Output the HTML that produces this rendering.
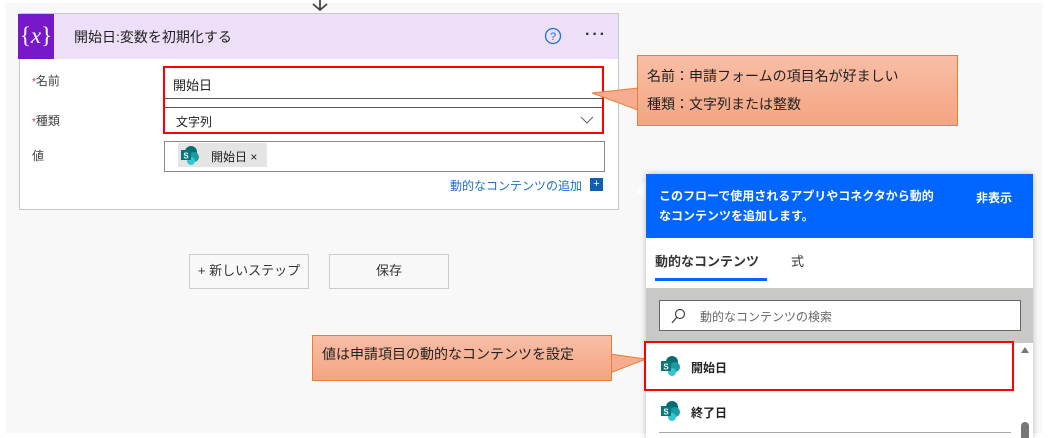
<!DOCTYPE html>
<html><head><meta charset="utf-8"><style>
*{box-sizing:border-box;margin:0;padding:0}
body{width:1053px;height:438px;background:#fff;position:relative;overflow:hidden;font-family:"Liberation Sans","Noto Sans CJK JP",sans-serif;color:#222}
.a{position:absolute}
.bg{left:5px;top:3px;width:1038px;height:430px;background:#f8f8f8}
.card{left:19px;top:13px;width:600px;height:197px;background:#fff;border:1px solid #c8c8c8}
.hdr{left:0;top:0;width:598px;height:45px;background:#ecdff7}
.ico{left:-2px;top:0;width:36px;height:45px;background:#7719c9;color:#fff;font-family:"Liberation Serif",serif;font-size:23px;text-align:center;line-height:44px}
.lbl{font-size:12px;color:#444}
.star{color:#d13438;font-size:10px}
.cl{background:linear-gradient(#f8bea6,#f4a582);border:1px solid #ed7d31;font-size:14px;color:#222}
.btn{border:1px solid #ccc;font-size:13px;text-align:center;line-height:32px;background:#f8f8f8;color:#333}
.panel{left:646px;top:174px;width:387px;height:264px;background:#fff;box-shadow:0 0 6px rgba(0,0,0,.25)}
</style></head><body>
<div class="a bg"></div>
<svg class="a" style="left:311px;top:0" width="18" height="12"><path d="M9 0V10M2 4L9 10L16 4" stroke="#444" stroke-width="1.8" fill="none"/></svg>
<div class="a card">
 <div class="a hdr"></div>
 <div class="a ico">{<i>x</i>}</div>
 <div class="a" style="left:54px;top:13px;font-size:14px;color:#222">開始日:変数を初期化する</div>
 <svg class="a" style="left:524px;top:13px" width="18" height="18"><circle cx="9" cy="9" r="7.5" stroke="#1a6fd8" stroke-width="1.3" fill="none"/><text x="9" y="13" font-size="11" text-anchor="middle" fill="#1a6fd8" font-family="Liberation Sans">?</text></svg>
 <div class="a" style="left:565px;top:12px;font-size:16px;letter-spacing:2px;color:#333;font-weight:bold">···</div>
 <div class="a lbl" style="left:12px;top:58px"><span class="star">*</span>名前</div>
 <div class="a lbl" style="left:12px;top:98px"><span class="star">*</span>種類</div>
 <div class="a lbl" style="left:12px;top:133px">値</div>
</div>
<div class="a" style="left:165px;top:68px;width:437px;height:31px;border-bottom:1px solid #555;background:#fff"></div>
<div class="a" style="left:173px;top:75px;font-size:13px">開始日</div>
<div class="a" style="left:165px;top:107px;width:437px;height:25px;border-top:1px solid #555;background:#fff"></div>
<div class="a" style="left:176px;top:113px;font-size:12px">文字列</div>
<svg class="a" style="left:580px;top:115px" width="14" height="10"><path d="M1 2L7 8L13 2" stroke="#666" fill="none"/></svg>
<div class="a" style="left:163px;top:66px;width:441px;height:68px;border:2px solid #f00"></div>
<div class="a" style="left:164px;top:141px;width:441px;height:31px;border:1px solid #888;background:#fff"></div>
<div class="a" style="left:178px;top:143px;width:89px;height:24px;background:#e4e4e4"></div>
<svg class="a" style="left:180px;top:145px" width="20" height="20"><circle cx="11" cy="7" r="6" fill="#036c70"/><circle cx="14" cy="12" r="5" fill="#1a9ba1"/><circle cx="11" cy="16" r="4" fill="#37c6d0"/><rect x="1" y="5" width="10" height="10" fill="#03787c"/><text x="6" y="13.5" font-size="8" fill="#fff" text-anchor="middle" font-weight="bold">S</text></svg>
<div class="a" style="left:211px;top:148px;font-size:12px">開始日 ×</div>
<div class="a" style="left:450px;top:177px;font-size:12px;color:#1a6fd8">動的なコンテンツの追加</div>
<div class="a" style="left:590px;top:178px;width:13px;height:13px;background:#0f5fb5;color:#fff;font-size:11px;line-height:12px;text-align:center">+</div>
<svg class="a" style="left:590px;top:85px" width="50" height="30"><path d="M48 3L2 8L48 25Z" fill="#f6ad8f" stroke="#ed7d31"/></svg>
<div class="a cl" style="left:637px;top:55px;width:321px;height:71px;padding:6px 0 0 9px;line-height:28px">名前：申請フォームの項目名が好ましい<br>種類：文字列または整数</div>
<div class="a btn" style="left:189px;top:254px;width:120px;height:35px">+ 新しいステップ</div>
<div class="a btn" style="left:329px;top:254px;width:120px;height:35px">保存</div>
<svg class="a" style="left:608px;top:350px" width="40" height="30"><path d="M2 4L38 9L2 23Z" fill="#f6ad8f" stroke="#ed7d31"/></svg>
<div class="a cl" style="left:312px;top:335px;width:300px;height:46px;padding:8px 0 0 9px">値は申請項目の動的なコンテンツを設定</div>
<svg class="a" style="left:634px;top:179px" width="14" height="24"><path d="M13 0L2 12L13 24Z" fill="#fff"/></svg>
<div class="a panel">
 <div class="a" style="left:0;top:0;width:387px;height:64px;background:#0066ff"></div>
 <div class="a" style="left:13px;top:12px;width:320px;font-size:12px;color:#fff;line-height:20px;font-weight:bold;white-space:nowrap">このフローで使用されるアプリやコネクタから動的<br>なコンテンツを追加します。</div>
 <div class="a" style="left:330px;top:15px;font-size:12px;color:#fff;font-weight:bold">非表示</div>
 <div class="a" style="left:9px;top:77px;font-size:13px;font-weight:bold;color:#333">動的なコンテンツ</div>
 <div class="a" style="left:145px;top:77px;font-size:13px;color:#333">式</div>
 <div class="a" style="left:9px;top:104px;width:112px;height:3px;background:#0066ff"></div>
 <div class="a" style="left:0;top:114px;width:387px;height:55px;background:#c8c9c6"></div>
 <div class="a" style="left:13px;top:126px;width:362px;height:31px;background:#fff;border:1px solid #666"></div>
 <svg class="a" style="left:24px;top:134px" width="16" height="16"><circle cx="10" cy="6" r="4.5" stroke="#444" fill="none" stroke-width="1.2"/><path d="M7 9L2 15" stroke="#444" stroke-width="1.3"/></svg>
 <div class="a" style="left:54px;top:134px;font-size:12px;color:#666">動的なコンテンツの検索</div>
 <svg class="a" style="left:14px;top:181px" width="22" height="22"><circle cx="12" cy="7" r="6" fill="#036c70"/><circle cx="15" cy="12" r="5" fill="#1a9ba1"/><circle cx="12" cy="17" r="4" fill="#37c6d0"/><rect x="1" y="6" width="10" height="10" fill="#03787c"/><text x="6" y="14.5" font-size="8" fill="#fff" text-anchor="middle" font-weight="bold">S</text></svg>
 <div class="a" style="left:45px;top:185px;font-size:12px;font-weight:bold">開始日</div>
 <svg class="a" style="left:14px;top:226px" width="22" height="22"><circle cx="12" cy="7" r="6" fill="#036c70"/><circle cx="15" cy="12" r="5" fill="#1a9ba1"/><circle cx="12" cy="17" r="4" fill="#37c6d0"/><rect x="1" y="6" width="10" height="10" fill="#03787c"/><text x="6" y="14.5" font-size="8" fill="#fff" text-anchor="middle" font-weight="bold">S</text></svg>
 <div class="a" style="left:45px;top:230px;font-size:12px;font-weight:bold">終了日</div>
 <div class="a" style="left:13px;top:258px;width:352px;height:1px;background:#aaa"></div>
 <svg class="a" style="left:374px;top:172px" width="10" height="8"><path d="M5 1L9 7H1Z" fill="#777"/></svg>
 <div class="a" style="left:375px;top:248px;width:8px;height:16px;background:#777;border-radius:4px 4px 0 0"></div>
</div>
<div class="a" style="left:644px;top:341px;width:370px;height:50px;border:2px solid #f00"></div>
</body></html>
